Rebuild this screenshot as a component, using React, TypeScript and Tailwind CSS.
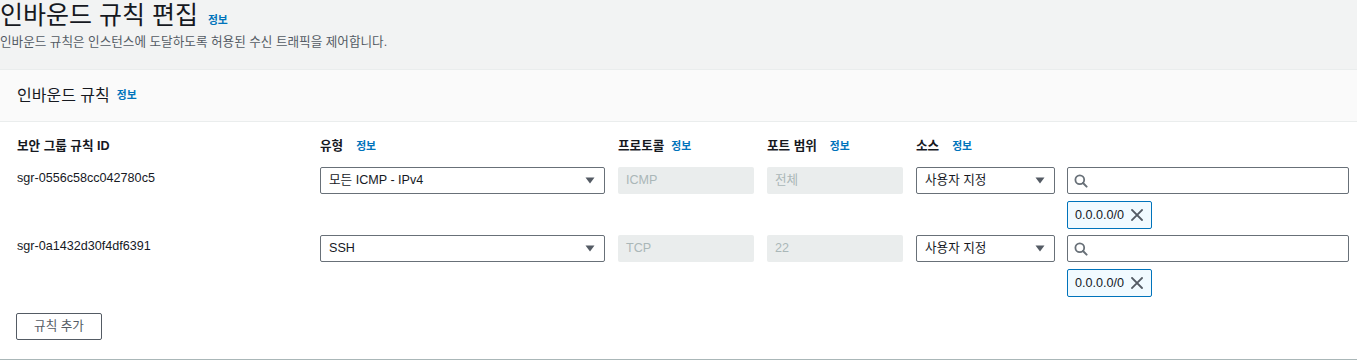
import React from "react";

const FONT = { fontFamily: '"Liberation Sans", "Noto Sans CJK KR", sans-serif' };

function Info({ className = "" }: { className?: string }) {
  return (
    <span className={"text-[10.8px] font-bold text-[#0073bb] " + className}>정보</span>
  );
}

function Caret() {
  return (
    <svg width="10" height="7" viewBox="0 0 10 7" className="shrink-0">
      <path d="M0.5 0.5 L9.5 0.5 L5 6.5 Z" fill="#545b64" />
    </svg>
  );
}

function Select({ value, width }: { value: string; width: string }) {
  return (
    <div
      className={
        "flex h-[27px] items-center justify-between rounded-[2px] border border-[#687078] bg-white pl-[8px] pr-[9px] text-[12.6px] text-[#16191f] " +
        width
      }
    >
      <span>{value}</span>
      <Caret />
    </div>
  );
}

function Disabled({ value }: { value: string }) {
  return (
    <div className="flex h-[27px] w-[136px] items-center rounded-[2px] bg-[#eaeded] pl-[8px] text-[12.6px] text-[#aab7b8]">
      {value}
    </div>
  );
}

function SearchBox() {
  return (
    <div className="flex h-[27px] w-[282px] items-center rounded-[2px] border border-[#687078] bg-white pl-[6px]">
      <svg width="14" height="14" viewBox="0 0 14 14" fill="none">
        <circle cx="5.8" cy="5.8" r="4.4" stroke="#687078" strokeWidth="1.8" />
        <path d="M9 9 L12.6 12.6" stroke="#687078" strokeWidth="2" strokeLinecap="round" />
      </svg>
    </div>
  );
}

function Token() {
  return (
    <div className="mt-[7px] flex h-[28px] w-[85px] items-center justify-between rounded-[2px] border border-[#0073bb] bg-[#f1faff] pl-[7px] pr-[8px] text-[12.6px] text-[#16191f]">
      <span>0.0.0.0/0</span>
      <svg width="12" height="12" viewBox="0 0 12 12" fill="none">
        <path d="M1 1 L11 11 M11 1 L1 11" stroke="#545b64" strokeWidth="1.8" strokeLinecap="square" />
      </svg>
    </div>
  );
}

function Row({ id, type, proto, port }: { id: string; type: string; proto: string; port: string }) {
  return (
    <div className="grid grid-cols-[303px_298px_149px_149px_151px_282px]">
      <div className="pt-[2px] text-[12.6px] leading-[18px] text-[#16191f]">{id}</div>
      <div>
        <Select value={type} width="w-[285px]" />
      </div>
      <div>
        <Disabled value={proto} />
      </div>
      <div>
        <Disabled value={port} />
      </div>
      <div>
        <Select value="사용자 지정" width="w-[139px]" />
      </div>
      <div>
        <SearchBox />
        <Token />
      </div>
    </div>
  );
}

export default function App() {
  return (
    <div className="h-[360px] w-full overflow-hidden bg-[#f2f3f3]" style={FONT}>
      <div className="h-[69px]">
        <div className="flex items-baseline">
          <h1 className="text-[25px] leading-[30px] font-normal text-[#16191f]">인바운드 규칙 편집</h1>
          <Info className="ml-[10px]" />
        </div>
        <p className="mt-[4px] text-[12.6px] leading-[16px] text-[#545b64]">
          인바운드 규칙은 인스턴스에 도달하도록 허용된 수신 트래픽을 제어합니다.
        </p>
      </div>
      <div className="border-t border-b border-[#eaeded] border-b-[#aab7b8] bg-white">
        <div className="flex h-[52px] items-center border-b border-[#eaeded] bg-[#fafafa] pl-[17px]">
          <h2 className="text-[16px] font-normal text-[#16191f]">인바운드 규칙</h2>
          <Info className="ml-[7px]" />
        </div>
        <div className="pl-[17px] pt-[15px] pb-[19px]">
          <div className="grid grid-cols-[303px_298px_149px_149px_151px_282px] text-[12.6px] leading-[18px] font-bold text-[#16191f]">
            <div>보안 그룹 규칙 ID</div>
            <div className="flex items-baseline">
              유형
              <Info className="ml-[13px]" />
            </div>
            <div className="flex items-baseline">
              프로토콜
              <Info className="ml-[7px]" />
            </div>
            <div className="flex items-baseline">
              포트 범위
              <Info className="ml-[13px]" />
            </div>
            <div className="flex items-baseline">
              소스
              <Info className="ml-[13px]" />
            </div>
            <div />
          </div>
          <div className="mt-[12px] flex flex-col gap-[6px]">
            <Row id="sgr-0556c58cc042780c5" type="모든 ICMP - IPv4" proto="ICMP" port="전체" />
            <Row id="sgr-0a1432d30f4df6391" type="SSH" proto="TCP" port="22" />
          </div>
          <button className="mt-[16px] -ml-[1px] flex h-[27px] w-[86px] items-center justify-center rounded-[2px] border border-[#545b64] bg-white text-[12.6px] text-[#545b64]">
            규칙 추가
          </button>
        </div>
      </div>
    </div>
  );
}
